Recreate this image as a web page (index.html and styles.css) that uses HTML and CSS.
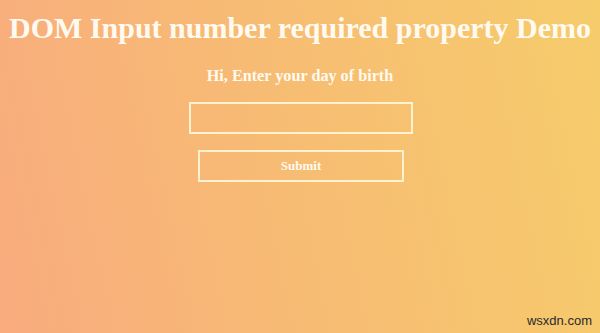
FILE: index.html
```html
<!DOCTYPE html>
<html>
<head>
<meta charset="utf-8">
<link rel="stylesheet" href="styles.css">
</head>
<body>
<div class="page">
  <h1 class="title">DOM Input number required property Demo</h1>
  <form class="form">
    <label class="label">Hi, Enter your day of birth</label>
    <input class="field" type="number" required>
    <button class="submit" type="button">Submit</button>
  </form>
  <div class="mark">wsxdn.com</div>
</div>
</body>
</html>
```
FILE: styles.css
```css
html, body {
  margin: 0;
  padding: 0;
}
body {
  width: 600px;
  height: 333px;
  overflow: hidden;
}
.page {
  position: relative;
  width: 600px;
  height: 333px;
  background: linear-gradient(78deg, #f9ab7e 0%, #f7bb74 45%, #f6cc6b 100%);
  font-family: "Liberation Serif", "Times New Roman", serif;
  color: #fffaf0;
  text-align: center;
  box-sizing: border-box;
  padding-top: 11px;
}
.title {
  margin: 0;
  font-size: 30px;
  line-height: 34px;
  font-weight: bold;
}
.form {
  display: flex;
  flex-direction: column;
  align-items: center;
  margin-top: 22px;
}
.label {
  font-size: 16.2px;
  font-weight: bold;
  line-height: 18px;
  display: block;
}
.field {
  margin-top: 17px;
  width: 224px;
  height: 32px;
  box-sizing: border-box;
  background: transparent;
  border: 2px solid #fdf2cf;
  outline: none;
  margin-left: 2px;
}
.submit {
  margin-top: 16px;
  width: 206px;
  height: 32px;
  box-sizing: border-box;
  background: transparent;
  border: 2px solid #fdf2cf;
  color: #fffaf0;
  font-family: "Liberation Serif", "Times New Roman", serif;
  font-weight: bold;
  font-size: 13px;
  margin-left: 2px;
}
.mark {
  position: absolute;
  right: 8px;
  bottom: 5px;
  font-family: "Liberation Sans", Arial, sans-serif;
  font-size: 13px;
  color: #2a2a2a;
}
```
